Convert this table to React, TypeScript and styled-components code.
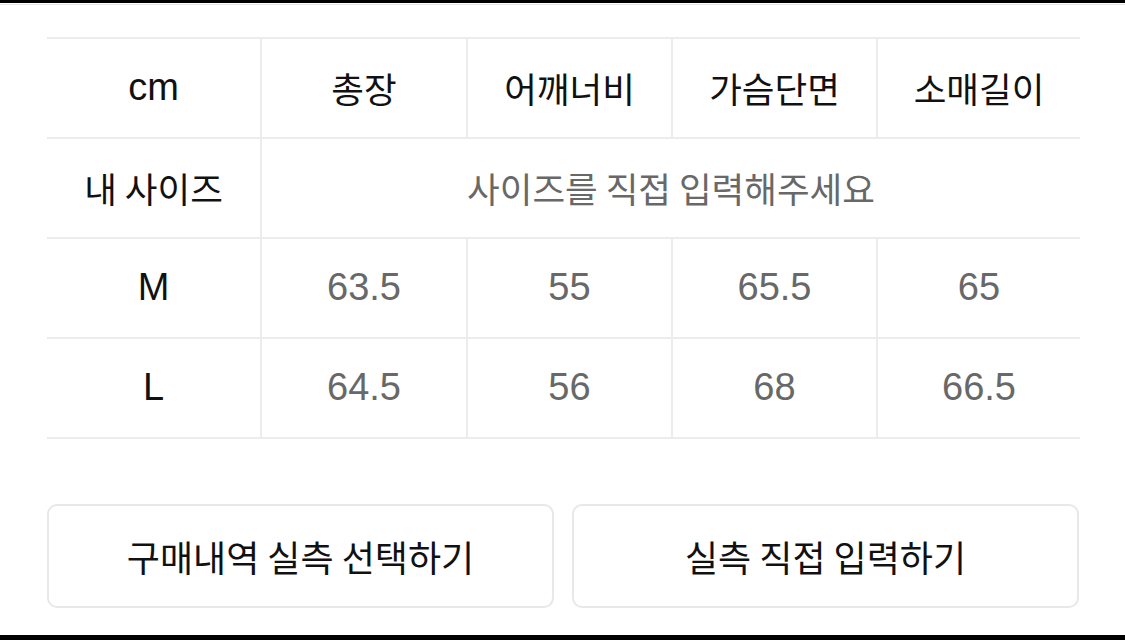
import React from "react";
import styled, { createGlobalStyle } from "styled-components";

const Global = createGlobalStyle`
  html, body { margin: 0; padding: 0; background: #fff; }
  body { font-family: "Liberation Sans", "Noto Sans CJK KR", sans-serif; }
`;

const Frame = styled.div`
  width: 1125px;
  height: 640px;
  box-sizing: border-box;
  border-top: 3px solid #000;
  border-bottom: 5px solid #000;
  display: flex;
  flex-direction: column;
  background: #fff;
`;

const TopEdge = styled.div`
  height: 1px;
  background: #e4e4e4;
  margin-top: 1px;
`;

const Content = styled.div`
  padding: 32px 45px 0 47px;
  display: flex;
  flex-direction: column;
`;

const Table = styled.div`
  display: grid;
  grid-template-columns: 213px 206px 205px 205px 204px;
  grid-auto-rows: 100px;
  border-top: 2px solid #ececec;
`;

const Cell = styled.div<{ $first?: boolean; $span?: number; $tone?: "dark" | "muted"; $latin?: boolean }>`
  display: flex;
  align-items: center;
  justify-content: center;
  box-sizing: border-box;
  border-bottom: 2px solid #ececec;
  border-left: ${(p) => (p.$first ? "none" : "2px solid #ececec")};
  grid-column: ${(p) => (p.$span ? `span ${p.$span}` : "auto")};
  color: ${(p) => (p.$tone === "muted" ? "#686868" : "#111")};
  font-family: ${(p) =>
    p.$latin ? `"Liberation Sans", Arial, sans-serif` : `"Noto Sans CJK KR", sans-serif`};
  font-size: ${(p) => (p.$latin ? "38px" : "35.5px")};
  padding-bottom: 2px;
`;

const Buttons = styled.div`
  display: flex;
  gap: 18px;
  margin-top: 65px;
`;

const Button = styled.button`
  flex: 0 0 507px;
  height: 104px;
  box-sizing: border-box;
  background: #fff;
  border: 2px solid #e8e8e8;
  border-radius: 10px;
  font-family: "Noto Sans CJK KR", sans-serif;
  font-size: 36px;
  color: #111;
  padding: 0;
`;

const headers = ["총장", "어깨너비", "가슴단면", "소매길이"];
const rows: { size: string; values: string[] }[] = [
  { size: "M", values: ["63.5", "55", "65.5", "65"] },
  { size: "L", values: ["64.5", "56", "68", "66.5"] },
];

export default function App() {
  return (
    <>
      <Global />
      <Frame>
        <TopEdge />
        <Content>
          <Table>
            <Cell $first $latin>cm</Cell>
            {headers.map((h) => (
              <Cell key={h}>{h}</Cell>
            ))}
            <Cell $first>내 사이즈</Cell>
            <Cell $span={4} $tone="muted">사이즈를 직접 입력해주세요</Cell>
            {rows.map((r) => (
              <React.Fragment key={r.size}>
                <Cell $first $latin>{r.size}</Cell>
                {r.values.map((v, i) => (
                  <Cell key={i} $latin $tone="muted">{v}</Cell>
                ))}
              </React.Fragment>
            ))}
          </Table>
          <Buttons>
            <Button>구매내역 실측 선택하기</Button>
            <Button>실측 직접 입력하기</Button>
          </Buttons>
        </Content>
      </Frame>
    </>
  );
}
